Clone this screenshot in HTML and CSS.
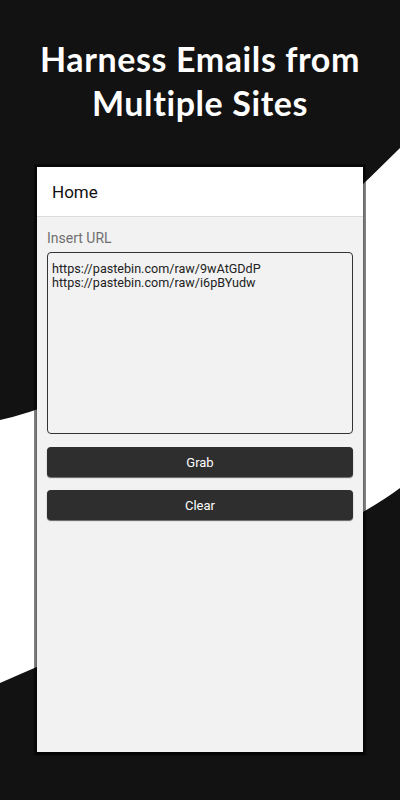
FILE: index.html
```html
<!doctype html>
<html>
    <head>
        <link rel="stylesheet" href="styles.css">
    </head>
    <body>
        <div class="screen">
            <svg class="backdrop" width="400" height="800" viewBox="0 0 400 800">
                <rect width="400" height="800" fill="#121212" />
                <path d="M0 420 Q166 382 400 148 L400 488 Q332 540 0 683 Z" fill="#ffffff" />
            </svg>
            <h1 class="title">Harness Emails from<br>Multiple Sites</h1>
            <div class="phone">
                <header class="appbar">Home</header>
                <main class="content">
                    <label class="label" for="urls">Insert URL</label>
                    <textarea id="urls" class="urls">https://pastebin.com/raw/9wAtGDdP
https://pastebin.com/raw/i6pBYudw</textarea>
                    <button class="btn">Grab</button>
                    <button class="btn">Clear</button>
                </main>
            </div>
        </div>
    </body>
</html>
```
FILE: styles.css
```css
* {
    margin: 0;
    padding: 0;
    box-sizing: border-box;
}
body,
html {
    width: 400px;
    height: 800px;
    overflow: hidden;
    background: #121212;
}
.screen {
    position: relative;
    width: 400px;
    height: 800px;
    overflow: hidden;
}
.backdrop {
    position: absolute;
    top: 0;
    left: 0;
}
.title {
    position: relative;
    padding-top: 37px;
    color: #ffffff;
    font-family: Lato, "Open Sans", sans-serif;
    font-weight: 700;
    font-size: 34px;
    letter-spacing: 0.6px;
    font-variant-ligatures: none;
    line-height: 44px;
    text-align: center;
}
.phone {
    position: relative;
    margin: 42px 0 0 37px;
    width: 326px;
    height: 585px;
    background: #f2f2f2;
    box-shadow: 0 0 0 3px rgba(0, 0, 0, 0.47), 0 3px 3px rgba(0, 0, 0, 0.6);
    font-family: Roboto, sans-serif;
    display: flex;
    flex-direction: column;
}
.appbar {
    height: 50px;
    background: #ffffff;
    border-bottom: 1px solid #dcdcdc;
    padding-left: 15px;
    display: flex;
    align-items: center;
    font-size: 17px;
    color: #111111;
}
.content {
    padding: 11px 10px 0;
    display: flex;
    flex-direction: column;
}
.label {
    font-size: 14px;
    color: #707070;
    line-height: 20px;
}
.urls {
    margin-top: 4px;
    height: 182px;
    border: 1px solid #333333;
    border-radius: 4px;
    background: #f2f2f2;
    padding: 9px 4px;
    font-family: Roboto, sans-serif;
    font-size: 12.6px;
    line-height: 13.5px;
    color: #222222;
    resize: none;
    outline: none;
}
.btn {
    margin-top: 13px;
    height: 30px;
    border: none;
    border-radius: 4px;
    background: #2e2e2e;
    box-shadow: 0 1px 1px rgba(0, 0, 0, 0.6);
    color: #ffffff;
    font-family: Roboto, sans-serif;
    font-size: 13px;
}
```
